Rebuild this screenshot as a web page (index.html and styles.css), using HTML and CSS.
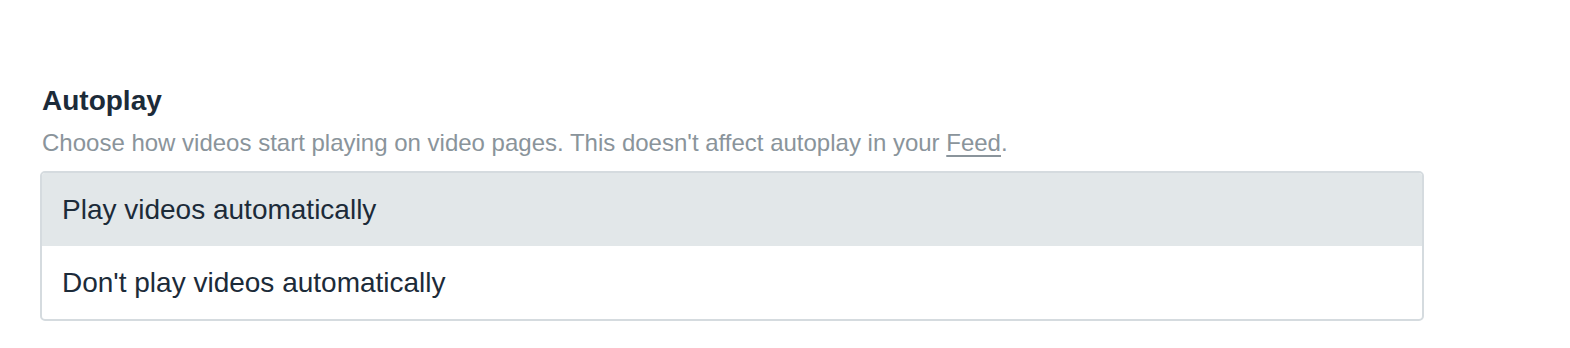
FILE: index.html
```html
<!DOCTYPE html>
<html>
<head>
<meta charset="utf-8">
<link rel="stylesheet" href="styles.css">
</head>
<body>
<section class="setting">
  <h2 class="title">Autoplay</h2>
  <p class="desc">Choose how videos start playing on video pages. This doesn't affect autoplay in your <a class="link" href="#">Feed</a>.</p>
  <div class="options">
    <div class="option selected">Play videos automatically</div>
    <div class="option">Don't play videos automatically</div>
  </div>
</section>
</body>
</html>
```

FILE: styles.css
```css
html, body {
  margin: 0;
  padding: 0;
  background: #ffffff;
  font-family: "Liberation Sans", Arial, sans-serif;
}
.setting {
  padding: 85px 146px 0 40px;
}
.title {
  margin: 0 0 0 2px;
  font-size: 28px;
  line-height: 32px;
  font-weight: 700;
  color: #1c2b39;
}
.desc {
  margin: 12px 0 14px 2px;
  font-size: 24px;
  line-height: 28px;
  color: #8a949b;
}
.link {
  color: #8a949b;
  text-decoration: underline;
  text-decoration-thickness: 2px;
  text-underline-offset: 4px;
}
.options {
  border: 2px solid #d5dbdf;
  border-radius: 5px;
  overflow: hidden;
}
.option {
  height: 73px;
  display: flex;
  align-items: center;
  padding-left: 20px;
  font-size: 28px;
  color: #1c2b39;
}
.option.selected {
  background: #e2e7e9;
}
```
